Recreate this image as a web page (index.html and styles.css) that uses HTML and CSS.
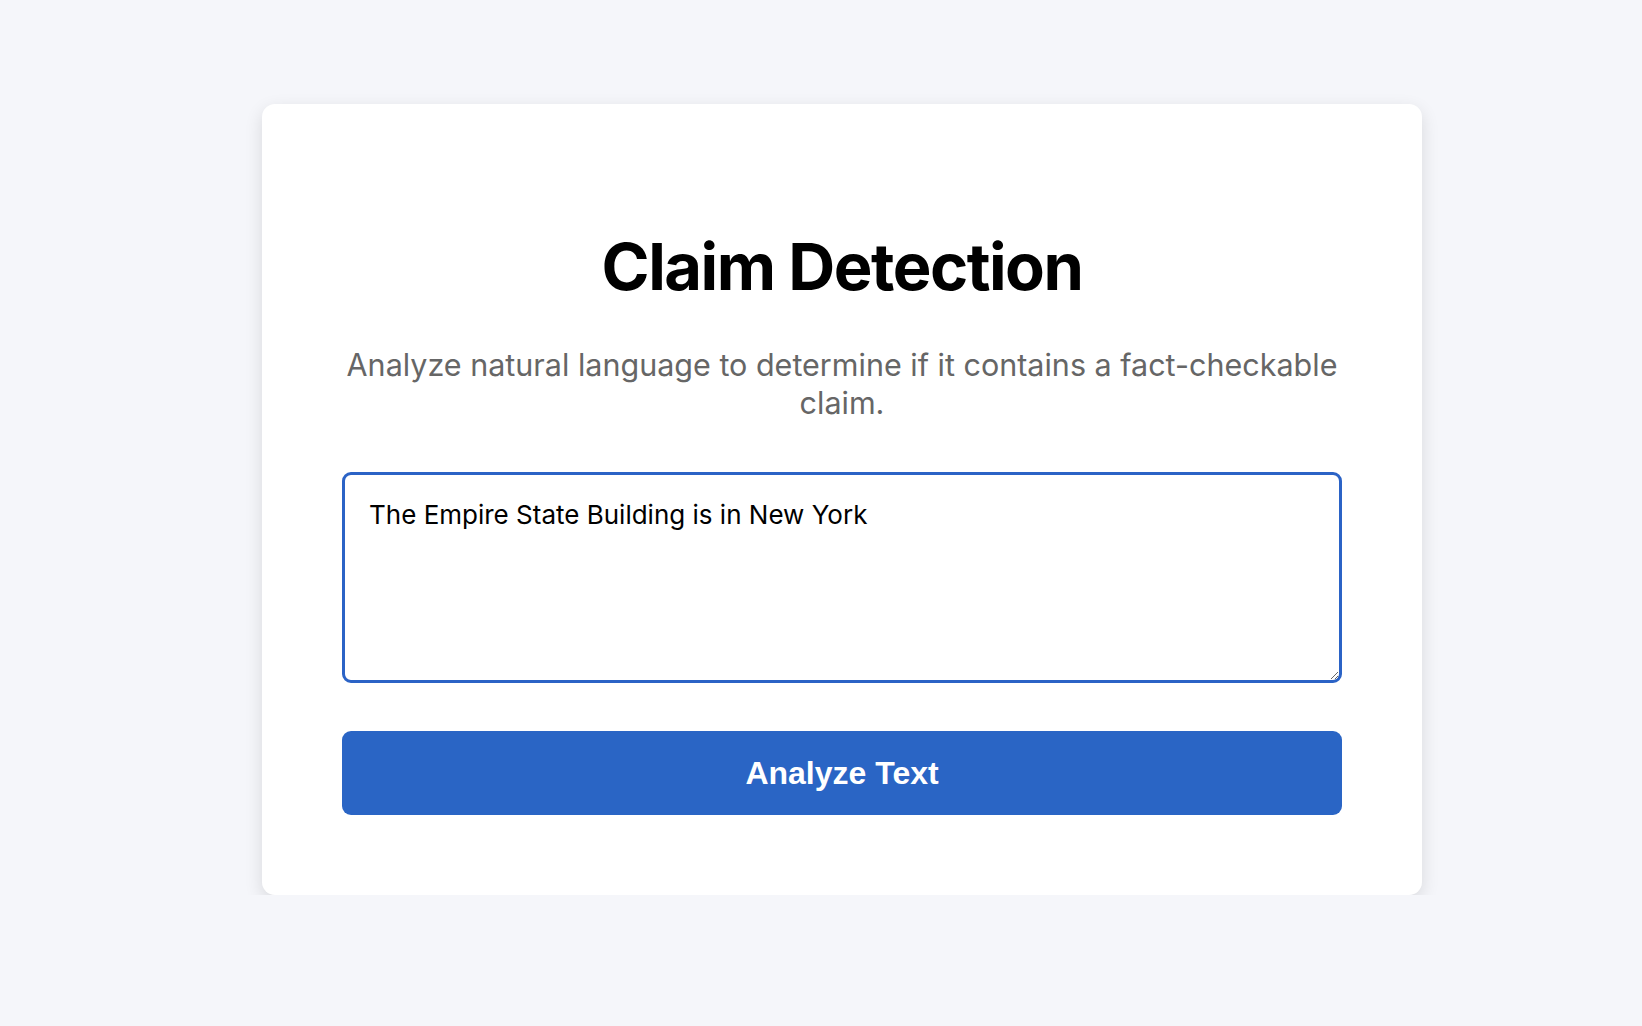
FILE: index.html
```html
<!DOCTYPE html>
<html lang="en">
<head>
<meta charset="utf-8">
<title>Claim Detection</title>
<link rel="stylesheet" href="styles.css">
</head>
<body>
  <main class="card">
    <h1 class="title">Claim Detection</h1>
    <p class="subtitle">Analyze natural language to determine if it contains a fact-checkable claim.</p>
    <textarea class="claim-input">The Empire State Building is in New York</textarea>
    <button class="analyze-btn" type="button">Analyze Text</button>
  </main>
</body>
</html>
```

FILE: styles.css
```css
* { box-sizing: border-box; }

html, body {
  margin: 0;
  background: #f5f6fa;
}

body {
  padding: 104px 0 0 262px;
  font-family: Inter, "Noto Sans", sans-serif;
}

.card {
  width: 1160px;
  background: #ffffff;
  border-radius: 13px;
  box-shadow: 0 6px 18px rgba(0, 0, 0, 0.12);
  padding: 80px;
  display: flex;
  flex-direction: column;
  align-items: stretch;
}

.title {
  margin: 42px 0 0;
  font-size: 65px;
  font-weight: 700;
  line-height: 81px;
  color: #000;
  text-align: center;
  letter-spacing: -1.5px;
}

.subtitle {
  margin: 39px 0 0;
  font-size: 30.5px;
  line-height: 38px;
  color: #666666;
  text-align: center;
}

.claim-input {
  margin-top: 50px;
  width: 100%;
  height: 211px;
  border: 3.5px solid #2b63c6;
  border-radius: 9px;
  padding: 24px 24px 20px;
  font-family: Inter, "Noto Sans", sans-serif;
  font-size: 26px;
  line-height: 32px;
  color: #000;
  background: #fff;
  resize: vertical;
  outline: none;
}

.analyze-btn {
  margin-top: 48px;
  width: 100%;
  height: 84px;
  border: none;
  border-radius: 9px;
  background: #2a65c5;
  color: #ffffff;
  font-family: "Liberation Sans", Arial, sans-serif;
  font-weight: 700;
  font-size: 32px;
  cursor: pointer;
}
```
